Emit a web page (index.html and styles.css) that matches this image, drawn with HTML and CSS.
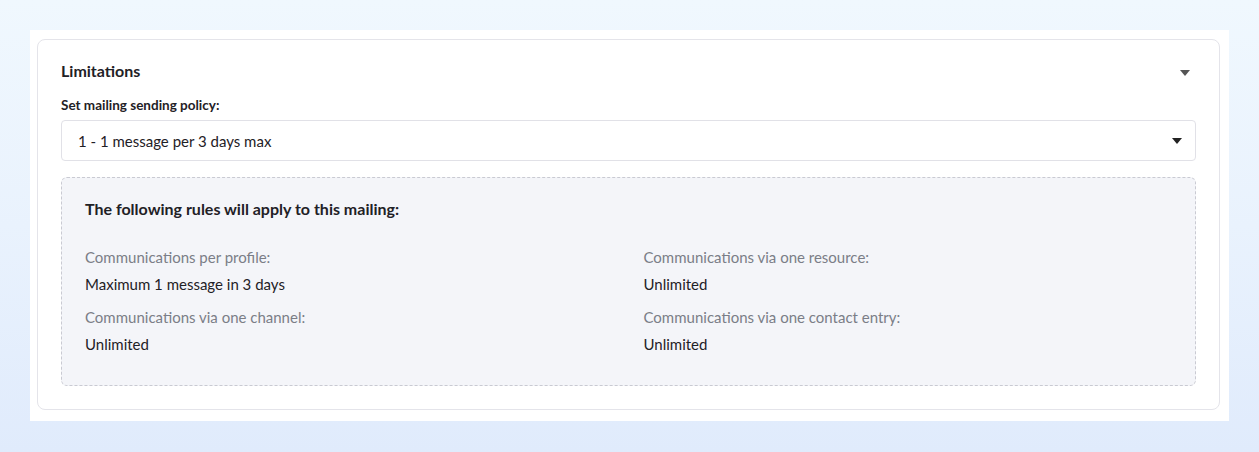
FILE: index.html
```html
<!DOCTYPE html>
<html lang="en">
<head>
    <meta charset="UTF-8">
    <meta name="viewport" content="width=device-width, initial-scale=1.0">
    <title>Limitations</title>
    <link rel="stylesheet" href="styles.css">
</head>
<body>
    <div class="sheet">
        <div class="card">
            <div class="card-header">
                <h2>Limitations</h2>
                <span class="caret caret-muted"></span>
            </div>

            <label class="field-label" for="policy">Set mailing sending policy:</label>
            <div class="select" id="policy">
                <span>1 - 1 message per 3 days max</span>
                <span class="caret"></span>
            </div>

            <div class="rules">
                <h3>The following rules will apply to this mailing:</h3>
                <div class="rules-grid">
                    <div class="rule">
                        <div class="rule-name">Communications per profile:</div>
                        <div class="rule-value">Maximum 1 message in 3 days</div>
                    </div>
                    <div class="rule">
                        <div class="rule-name">Communications via one resource:</div>
                        <div class="rule-value">Unlimited</div>
                    </div>
                    <div class="rule">
                        <div class="rule-name">Communications via one channel:</div>
                        <div class="rule-value">Unlimited</div>
                    </div>
                    <div class="rule">
                        <div class="rule-name">Communications via one contact entry:</div>
                        <div class="rule-value">Unlimited</div>
                    </div>
                </div>
            </div>
        </div>
    </div>
</body>
</html>
```

FILE: styles.css
```css
html, body {
    height: 100%;
}
body {
    margin: 0;
    padding: 30px;
    box-sizing: border-box;
    font-family: Lato, "Open Sans", sans-serif;
    color: #1f2126;
    background: linear-gradient(180deg, #f0f8fe 0%, #e9f2fd 50%, #e0ebfc 100%);
}
.sheet {
    background-color: #fff;
    width: 1199px;
    padding: 9px 9px 11px 7px;
    box-sizing: border-box;
}
.card {
    border: 1px solid #e4e4ea;
    border-radius: 8px;
    padding: 18px 23px 23px 23px;
}
.card-header {
    display: flex;
    align-items: center;
    justify-content: space-between;
    height: 24px;
    margin-bottom: 14px;
}
.card-header h2 {
    margin: 0;
    font-size: 16px;
    font-weight: 700;
}
.caret {
    width: 0;
    height: 0;
    border-left: 5px solid transparent;
    border-right: 5px solid transparent;
    border-top: 6px solid #222;
}
.caret-muted {
    border-top-color: #555;
    margin: 5px 6px 0 0;
}
.field-label {
    display: block;
    font-size: 13.5px;
    font-weight: 700;
    line-height: 18px;
    margin-bottom: 6px;
}
.select {
    display: flex;
    align-items: center;
    justify-content: space-between;
    height: 41px;
    box-sizing: border-box;
    border: 1px solid #e1e1e7;
    border-radius: 4px;
    padding: 0 13px 0 16px;
    font-size: 15px;
}
.rules {
    margin-top: 16px;
    background-color: #f4f5f9;
    border: 1px dashed #c9cad2;
    border-radius: 6px;
    padding: 21px 23px 31px 23px;
}
.rules h3 {
    margin: 0 0 28px 0;
    font-size: 16px;
    font-weight: 700;
    line-height: 20px;
}
.rules-grid {
    display: grid;
    grid-template-columns: 1fr 1fr;
    column-gap: 30px;
    row-gap: 13px;
}
.rule {
    font-size: 15px;
    line-height: 20px;
}
.rule-name {
    color: #7b7e87;
    margin-bottom: 7px;
}
.rule-value {
    color: #1f2126;
}
```
